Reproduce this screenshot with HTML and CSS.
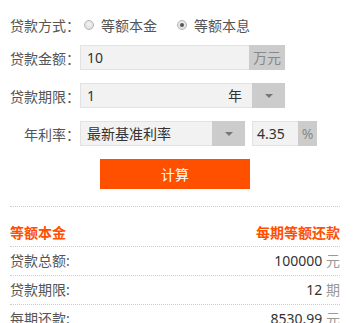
FILE: index.html
```html
<!DOCTYPE html>
<html lang="zh-CN">
<head>
<meta charset="utf-8">
<title>贷款计算器</title>
<link rel="stylesheet" href="styles.css">
</head>
<body>
<div class="calc">
  <div class="form">
    <div class="row row-radio">
      <span class="label">贷款方式：</span>
      <span class="opt"><span class="radio"></span>等额本金</span>
      <span class="opt"><span class="radio checked"></span>等额本息</span>
    </div>
    <div class="row">
      <span class="label">贷款金额：</span>
      <div class="field w205">
        <span class="val">10</span>
        <span class="unit u36">万元</span>
      </div>
    </div>
    <div class="row">
      <span class="label">贷款期限：</span>
      <div class="field w205">
        <span class="val">1</span>
        <span class="suffix">年</span>
        <span class="arrow"><i></i></span>
      </div>
    </div>
    <div class="row">
      <span class="label">年利率：</span>
      <div class="field w165">
        <span class="val">最新基准利率</span>
        <span class="arrow"><i></i></span>
      </div>
      <div class="field rate">
        <span class="val">4.35</span>
        <span class="unit u19">%</span>
      </div>
    </div>
    <div class="btn-row">
      <button class="btn" type="button">计算</button>
    </div>
  </div>
  <div class="result">
    <div class="res-head">
      <span>等额本金</span>
      <span>每期等额还款</span>
    </div>
    <div class="res-row"><span class="k">贷款总额:</span><span class="v">100000 <em>元</em></span></div>
    <div class="res-row"><span class="k">贷款期限:</span><span class="v">12 <em>期</em></span></div>
    <div class="res-row"><span class="k">每期还款:</span><span class="v">8530.99 <em>元</em></span></div>
  </div>
</div>
</body>
</html>
```
FILE: styles.css
```css
html, body {
  margin: 0;
  padding: 0;
  background: #fff;
}
body {
  font-family: "Noto Sans", "Noto Sans CJK SC", sans-serif;
  font-size: 14px;
  color: #555;
}
.calc {
  width: 330px;
  padding-left: 10px;
}
.form {
  padding-top: 12px;
}
.row {
  display: flex;
  align-items: center;
  height: 25px;
  margin-bottom: 13px;
}
.row-radio {
  height: 26px;
  margin-bottom: 7px;
}
.label {
  width: 70px;
  text-align: right;
  white-space: nowrap;
  color: #555;
}
.opt {
  display: flex;
  align-items: center;
  margin-left: 4px;
  margin-right: 16px;
  color: #555;
}
.radio {
  width: 8px;
  height: 8px;
  border: 1px solid #b5b5b5;
  border-radius: 50%;
  background: radial-gradient(circle at 50% 40%, #f4f4f4 0%, #d8d8d8 100%);
  margin-right: 7px;
  position: relative;
}
.radio.checked::after {
  content: "";
  position: absolute;
  left: 2px;
  top: 2px;
  width: 4px;
  height: 4px;
  border-radius: 50%;
  background: #555;
}
.field {
  display: flex;
  align-items: stretch;
  height: 25px;
  box-sizing: border-box;
  border: 1px solid #e2e2e2;
  background: #f2f2f2;
}
.w205 { width: 205px; }
.w165 { width: 165px; }
.rate {
  width: 65px;
  margin-left: 7px;
}
.val {
  flex: 1;
  padding-left: 6px;
  line-height: 23px;
  color: #333;
  white-space: nowrap;
}
.rate .val {
  padding-left: 4px;
}
.suffix {
  line-height: 23px;
  color: #333;
  padding-right: 10px;
}
.unit {
  background: #ccc;
  color: #888;
  line-height: 23px;
  text-align: center;
  margin: -1px -1px -1px 0;
  padding-top: 1px;
}
.u36 { width: 36px; }
.u19 { width: 19px; }
.arrow {
  width: 33px;
  background: #ccc;
  margin: -1px -1px -1px 0;
  display: flex;
  align-items: center;
  justify-content: center;
}
.arrow i {
  width: 0;
  height: 0;
  border-left: 4px solid transparent;
  border-right: 4px solid transparent;
  border-top: 4px solid #777;
}
.btn-row {
  display: flex;
  padding-left: 90px;
}
.btn {
  width: 150px;
  height: 30px;
  border: 0;
  background: #ff5000;
  color: #fff;
  font-family: "Noto Sans", "Noto Sans CJK SC", sans-serif;
  font-size: 14px;
  padding: 0;
  cursor: pointer;
}
.result {
  margin-top: 17px;
  border-top: 1px dotted #ccc;
}
.res-head {
  display: flex;
  justify-content: space-between;
  padding-top: 16px;
  line-height: 20px;
  height: 23px;
  border-bottom: 1px dotted #ccc;
  color: #ff5000;
  font-weight: bold;
}
.res-row {
  display: flex;
  justify-content: space-between;
  line-height: 28px;
  border-bottom: 1px dotted #ccc;
}
.k {
  color: #555;
}
.v {
  color: #333;
}
.v em {
  font-style: normal;
  color: #999;
}
```
